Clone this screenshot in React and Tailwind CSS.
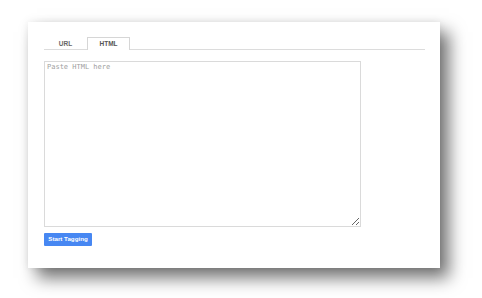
export default function App() {
  return (
    <div className="w-[482px] h-[298px] bg-white overflow-hidden pt-[22px] pl-[28px]" style={{ fontFamily: '"Liberation Sans", Arial, sans-serif' }}>
      <div className="w-[412px] h-[246px] bg-white shadow-[9px_10px_16px_rgba(0,0,0,0.55),0_0_8px_rgba(0,0,0,0.08)] pt-[15px] pl-[16px]">
        <div className="w-[381px] flex border-b border-[#dcdcdc] h-[13px]">
          <div className="w-[43px] h-[13px] flex items-center justify-center text-[6.5px] font-bold text-[#666]">URL</div>
          <div className="w-[43px] h-[13px] flex items-center justify-center text-[6.5px] font-bold text-[#555] bg-white border border-b-0 border-[#d6d6d6] -mb-px">HTML</div>
        </div>
        <textarea
          className="block mt-[11px] w-[317px] h-[166px] border border-[#dadada] resize-y px-[2px] pt-[1px] leading-[9px] text-[7px] text-[#333] placeholder:text-[#a0a0a0] outline-none"
          style={{ fontFamily: '"DejaVu Sans Mono", "Liberation Mono", monospace' }}
          placeholder="Paste HTML here"
        />
        <button className="block mt-[6px] w-[48px] h-[13px] bg-[#4787f2] rounded-[1px] text-white text-[6.2px] font-bold leading-none">Start Tagging</button>
      </div>
    </div>
  );
}
